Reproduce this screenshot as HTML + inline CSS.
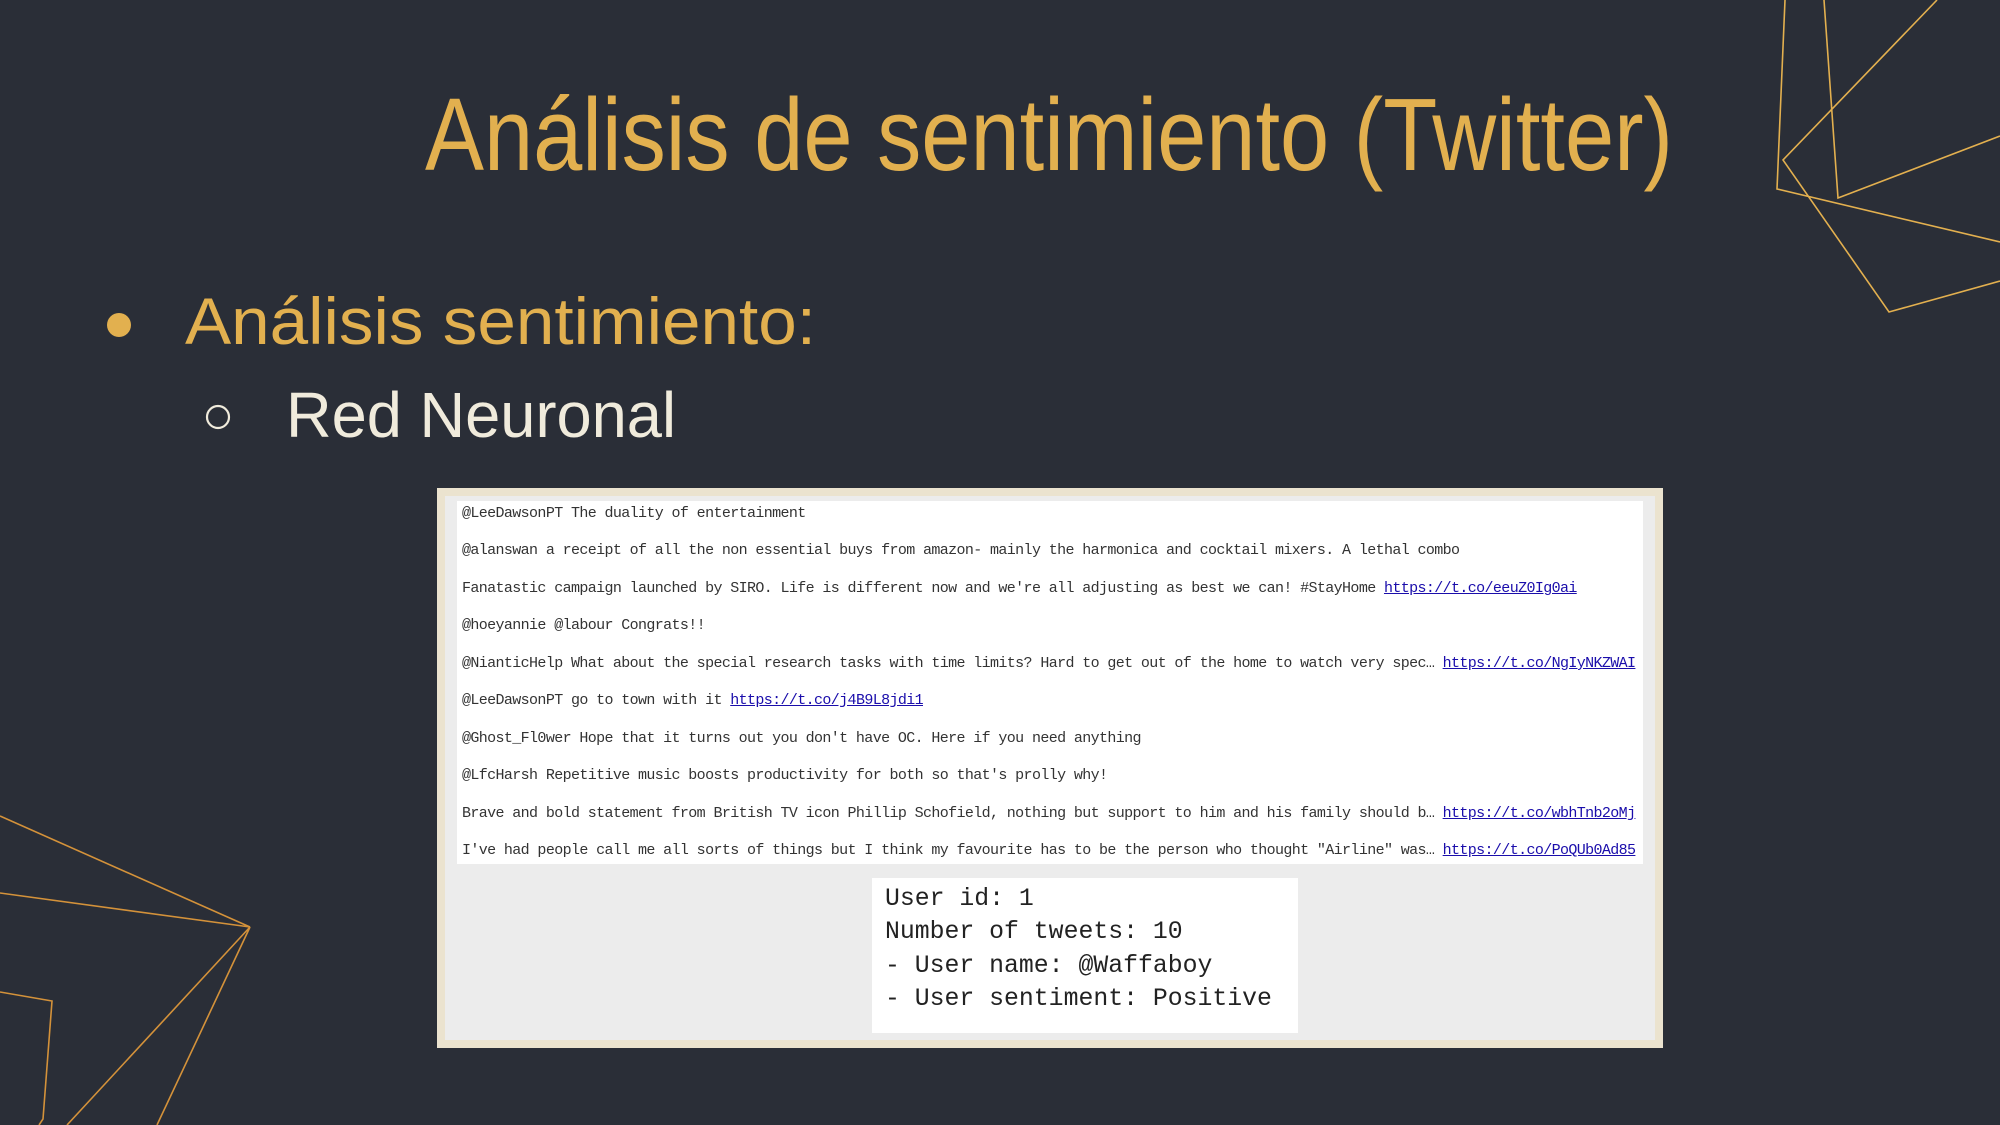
<!DOCTYPE html>
<html><head><meta charset="utf-8"><style>
body{margin:0;width:2000px;height:1125px;background:#2a2e37;overflow:hidden;position:relative;font-family:"Liberation Sans",sans-serif}
.box{position:absolute;left:437px;top:488px;width:1226px;height:560px;background:#ebe3cf}
.inner{position:absolute;left:445px;top:496px;width:1210px;height:544px;background:#ececec}
.tw{position:absolute;left:457px;top:501px;width:1186px;height:363px;background:#fff}
.tl{position:absolute;left:462px;font-family:"Liberation Mono",monospace;font-size:15px;letter-spacing:-0.62px;color:#333;white-space:pre;line-height:18px}
.tl a{color:#1a0dab;text-decoration:underline}
.ub{position:absolute;left:872px;top:878px;width:426px;height:155px;background:#fff}
.ul{position:absolute;left:885px;font-family:"Liberation Mono",monospace;font-size:24.8px;color:#222;white-space:pre;line-height:30px}
</style></head><body>
<svg width="2000" height="1125" style="position:absolute;left:0;top:0">
<g fill="none" stroke="#e3b04f" stroke-width="1.6">
<polyline points="1785,0 1777,189 2000,242"/>
<polyline points="1824,0 1838,198 2000,136"/>
<polyline points="1937,0 1783,160 1889,312 2000,281"/>
<g stroke="#d4923a">
<line x1="0" y1="816" x2="250" y2="927"/>
<line x1="0" y1="893" x2="250" y2="927"/>
<line x1="250" y1="927" x2="67" y2="1125"/>
<line x1="250" y1="927" x2="157" y2="1125"/>
<polyline points="0,992 52,1001 43,1119 39,1125"/>
</g></g>
<text x="425" y="170" font-family="Liberation Sans" font-size="103" fill="#e2b04f" textLength="1248" lengthAdjust="spacingAndGlyphs">Análisis de sentimiento (Twitter)</text>
<circle cx="119" cy="325" r="12" fill="#e2b04f"/>
<text x="185" y="344" font-family="Liberation Sans" font-size="66" fill="#e2b04f" textLength="631" lengthAdjust="spacingAndGlyphs">Análisis sentimiento:</text>
<circle cx="218" cy="417" r="11" fill="none" stroke="#f0ebdc" stroke-width="2.2"/>
<text x="286" y="437" font-family="Liberation Sans" font-size="64" fill="#f0ebdc" textLength="390" lengthAdjust="spacingAndGlyphs">Red Neuronal</text>
</svg>
<div class="box"></div><div class="inner"></div><div class="tw"></div>
<div class="tl" style="top:505px">@LeeDawsonPT The duality of entertainment</div>
<div class="tl" style="top:542px">@alanswan a receipt of all the non essential buys from amazon- mainly the harmonica and cocktail mixers. A lethal combo</div>
<div class="tl" style="top:580px">Fanatastic campaign launched by SIRO. Life is different now and we're all adjusting as best we can! #StayHome <a>https://t.co/eeuZ0Ig0ai</a></div>
<div class="tl" style="top:617px">@hoeyannie @labour Congrats!!</div>
<div class="tl" style="top:655px">@NianticHelp What about the special research tasks with time limits? Hard to get out of the home to watch very spec… <a>https://t.co/NgIyNKZWAI</a></div>
<div class="tl" style="top:692px">@LeeDawsonPT go to town with it <a>https://t.co/j4B9L8jdi1</a></div>
<div class="tl" style="top:730px">@Ghost_Fl0wer Hope that it turns out you don't have OC. Here if you need anything</div>
<div class="tl" style="top:767px">@LfcHarsh Repetitive music boosts productivity for both so that's prolly why!</div>
<div class="tl" style="top:805px">Brave and bold statement from British TV icon Phillip Schofield, nothing but support to him and his family should b… <a>https://t.co/wbhTnb2oMj</a></div>
<div class="tl" style="top:842px">I've had people call me all sorts of things but I think my favourite has to be the person who thought "Airline" was… <a>https://t.co/PoQUb0Ad85</a></div>
<div class="ub"></div>
<div class="ul" style="top:884px">User id: 1</div>
<div class="ul" style="top:917px">Number of tweets: 10</div>
<div class="ul" style="top:951px">- User name: @Waffaboy</div>
<div class="ul" style="top:984px">- User sentiment: Positive</div>
</body></html>
